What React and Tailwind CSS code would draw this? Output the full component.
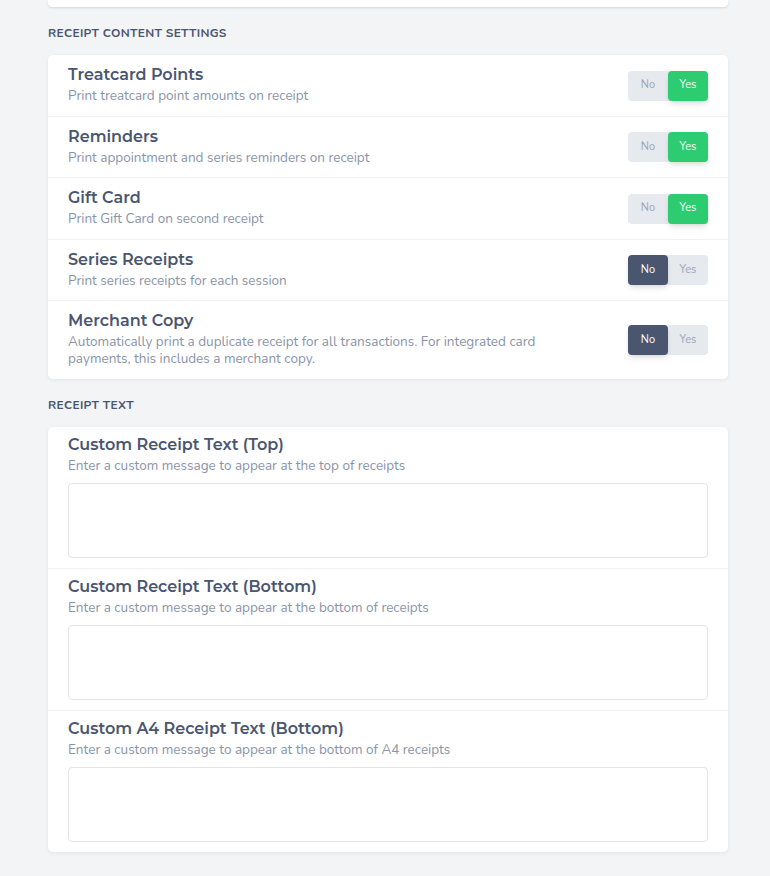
import React, { useState } from "react";

const toggles = [
  { title: "Treatcard Points", desc: "Print treatcard point amounts on receipt", on: true },
  { title: "Reminders", desc: "Print appointment and series reminders on receipt", on: true },
  { title: "Gift Card", desc: "Print Gift Card on second receipt", on: true },
  { title: "Series Receipts", desc: "Print series receipts for each session", on: false },
  {
    title: "Merchant Copy",
    desc: "Automatically print a duplicate receipt for all transactions. For integrated card payments, this includes a merchant copy.",
    on: false,
  },
];

const texts = [
  { title: "Custom Receipt Text (Top)", desc: "Enter a custom message to appear at the top of receipts" },
  { title: "Custom Receipt Text (Bottom)", desc: "Enter a custom message to appear at the bottom of receipts" },
  { title: "Custom A4 Receipt Text (Bottom)", desc: "Enter a custom message to appear at the bottom of A4 receipts" },
];

const titleFont = "font-['Montserrat','Open_Sans',sans-serif]";
const bodyFont = "font-['Nunito','Lato',sans-serif]";

const YesNo = ({ value, onChange }) => (
  <div className={`mt-1 flex h-[30px] w-20 shrink-0 rounded bg-[#e6e9ee] text-[11px] ${bodyFont}`}>
    <button
      onClick={() => onChange(false)}
      className={`flex-1 rounded ${!value ? "bg-[#4a5670] text-white shadow-md" : "text-[#9aa4b5]"}`}
    >
      No
    </button>
    <button
      onClick={() => onChange(true)}
      className={`flex-1 rounded ${value ? "bg-[#2ecc71] text-white shadow-md" : "text-[#9aa4b5]"}`}
    >
      Yes
    </button>
  </div>
);

export default function App() {
  const [state, setState] = useState(toggles.map((t) => t.on));

  return (
    <div className="min-h-[876px] bg-[#f3f4f6] pl-12 pr-[42px] pb-6">
      {/* tail of the card above */}
      <div className="h-[7px] rounded-b bg-white shadow-sm" />

      <h2 className={`mt-[19px] mb-[15px] text-[12px] leading-[14px] font-bold uppercase tracking-wide text-[#4a5670] ${bodyFont}`}>
        Receipt Content Settings
      </h2>
      <div className="divide-y divide-[#f0f1f4] rounded-[5px] bg-white shadow-[0_1px_4px_rgba(0,0,0,0.07)]">
        {toggles.map((t, i) => (
          <div key={t.title} className="flex items-center justify-between px-5 pt-[8px] pb-[11.5px]">
            <div className="max-w-[490px]">
              <div className={`text-[16px] font-semibold leading-[24px] text-[#4a5670] ${titleFont}`}>{t.title}</div>
              <div className={`text-[13.5px] leading-[17px] text-[#8a94a8] ${bodyFont}`}>{t.desc}</div>
            </div>
            <YesNo
              value={state[i]}
              onChange={(v) => setState((s) => s.map((x, j) => (j === i ? v : x)))}
            />
          </div>
        ))}
      </div>

      <h2 className={`mt-[19px] mb-[15px] text-[12px] leading-[14px] font-bold uppercase tracking-wide text-[#4a5670] ${bodyFont}`}>
        Receipt Text
      </h2>
      <div className="divide-y divide-[#f0f1f4] rounded-[5px] bg-white shadow-[0_1px_4px_rgba(0,0,0,0.07)]">
        {texts.map((t) => (
          <div key={t.title} className="px-5 pt-[6px] pb-[10px]">
            <div className={`text-[16px] font-semibold leading-[24px] text-[#4a5670] ${titleFont}`}>{t.title}</div>
            <div className={`text-[13.5px] leading-[17px] text-[#8a94a8] ${bodyFont}`}>{t.desc}</div>
            <textarea className="mt-[9px] block h-[75px] w-full resize-none rounded border border-[#e2e5ea] outline-none" />
          </div>
        ))}
      </div>
    </div>
  );
}
